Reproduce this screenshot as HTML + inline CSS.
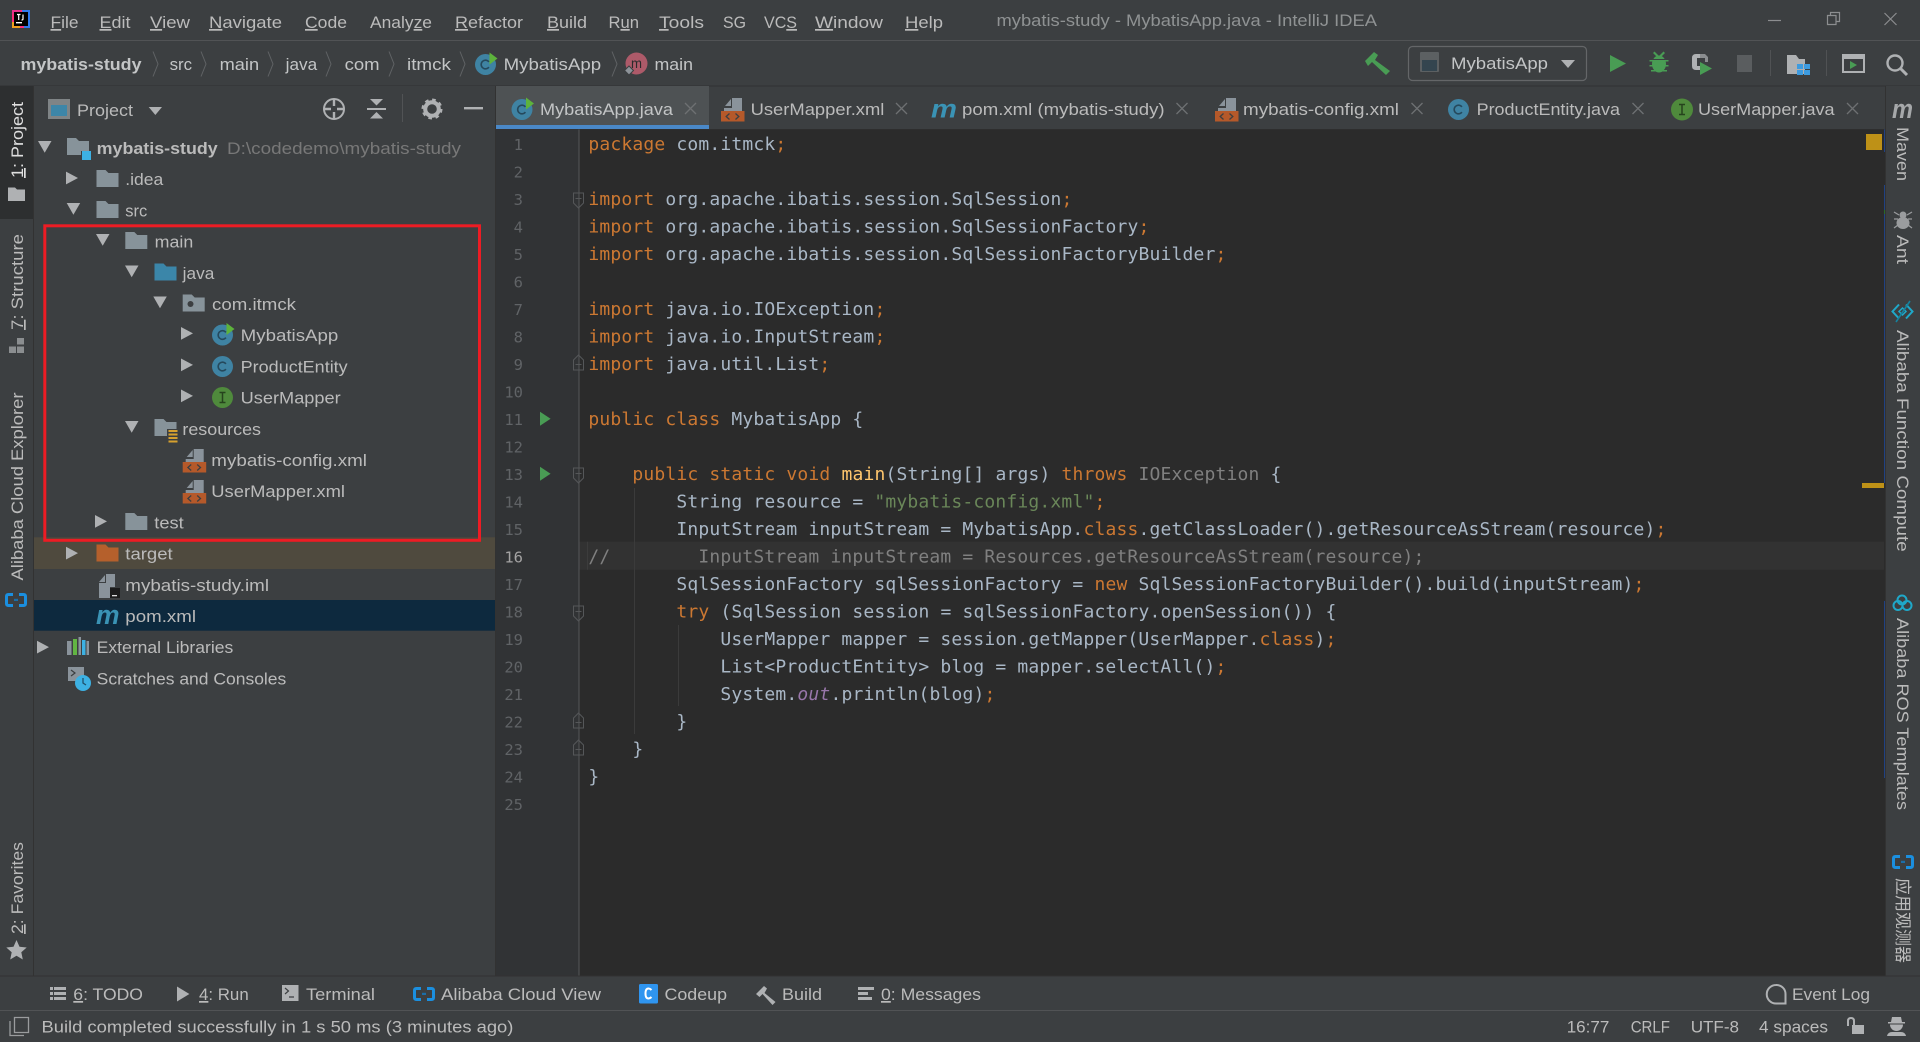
<!DOCTYPE html>
<html lang="en">
<head>
<meta charset="utf-8">
<title>mybatis-study - MybatisApp.java - IntelliJ IDEA</title>
<style>
html,body{margin:0;padding:0;background:#3c3f41;width:1920px;height:1042px;overflow:hidden}
svg{display:block}
text{font-family:"Liberation Sans","Noto Sans CJK SC",sans-serif;font-size:17px;fill:#bbbbbb;white-space:pre}
.u{text-decoration:underline}
.m{fill:#bbbbbb}
.t{fill:#c3c5c6}
.code text,text.c{font-family:"DejaVu Sans Mono","Liberation Mono",monospace;font-size:18px;letter-spacing:.164px;fill:#a9b7c6}
.k{fill:#cc7832}
.s{fill:#6a8759}
.g{fill:#808080}
.f{fill:#ffc66d}
.o{fill:#9876aa;font-style:italic}
.n text{font-family:"DejaVu Sans Mono","Liberation Mono",monospace;font-size:15.5px;fill:#606366;text-anchor:end}
</style>
</head>
<body>
<svg xmlns="http://www.w3.org/2000/svg" width="1920" height="1042" viewBox="0 0 1920 1042">
<defs>
<path id="folder" d="M0 0h9l3 3h10v14H0z"/>
<g id="cls"><circle cx="0" cy="0" r="10.5" fill="#3f83a3"/><path d="M3.4-2.6A4.3 4.3 0 1 0 3.4 2.6" fill="none" stroke="#25495c" stroke-width="1.6"/></g>
<g id="clsrun"><use href="#cls"/><path d="M4-12l8 6-8 6z" fill="#5db33c"/></g>
<g id="xmlicon"><path d="M4 8l6-7v7zM11 0h10v13H3v-3h8z" fill="#8a939b"/><rect x="0" y="13" width="23.5" height="10.5" fill="#b5592a"/><path d="M8.5 15.5l-3.3 3 3.3 3M14.5 15.5l3.3 3-3.3 3" fill="none" stroke="#3c3f41" stroke-width="1.3"/></g>
<path id="arrR" d="M0 0l12 6.4L0 12.800z" fill="#afb1b3"/>
<path id="arrD" d="M0 0h13.500L6.700 11.800z" fill="#afb1b3"/>
<path id="foldD" d="M0 0h10v10l-5 5-5-5zM2 5.500h6" fill="none" stroke="#555759" stroke-width="1"/>
<path id="foldU" d="M0 15h10V5L5 0 0 5zM2 9.500h6" fill="none" stroke="#555759" stroke-width="1"/>
<path id="x" d="M0 0l11 11M11 0L0 11" fill="none" stroke="#6e7072" stroke-width="1.300"/>
<g id="chev"><path d="M0-12.500l5 12.500-5 12.500" fill="none" stroke="#606365" stroke-width="1"/></g>
<g id="cloud"><path d="M8 1.500H3.500Q1.500 1.500 1.500 3.500v7q0 2 2 2H8M14 1.500h4.500q2 0 2 2v7q0 2-2 2H14" fill="none" stroke="#1b8fdf" stroke-width="3"/><rect x="9" y="5.800" width="4" height="2.200" fill="#1b6ea8"/></g>
</defs>

<!-- base -->
<rect width="1920" height="1042" fill="#3c3f41"/>

<!-- title bar -->
<g>
<rect x="12" y="10" width="18" height="18" fill="#ff2d7a"/>
<path d="M12 10h9v4h-9z" fill="#e8318a"/><path d="M22 10h8v18h-6z" fill="#2f7bf0"/><path d="M12 22h8v6h-8z" fill="#f0a020"/>
<rect x="14" y="12" width="14" height="14" fill="#000"/>
<rect x="16" y="22" width="6" height="1.400" fill="#fff"/>
<path d="M17 14.500h3.500M18.700 14.500v5.500M23 14.500v4.500q0 1-1.500 1" fill="none" stroke="#fff" stroke-width="1.200"/>
</g>
<g class="menu">
<text class="m" x="50.500" y="28" textLength="28" lengthAdjust="spacingAndGlyphs"><tspan class="u">F</tspan>ile</text>
<text class="m" x="99.500" y="28" textLength="31" lengthAdjust="spacingAndGlyphs"><tspan class="u">E</tspan>dit</text>
<text class="m" x="150" y="28" textLength="40" lengthAdjust="spacingAndGlyphs"><tspan class="u">V</tspan>iew</text>
<text class="m" x="209" y="28" textLength="73" lengthAdjust="spacingAndGlyphs"><tspan class="u">N</tspan>avigate</text>
<text class="m" x="305" y="28" textLength="42" lengthAdjust="spacingAndGlyphs"><tspan class="u">C</tspan>ode</text>
<text class="m" x="370" y="28" textLength="62" lengthAdjust="spacingAndGlyphs">Analy<tspan class="u">z</tspan>e</text>
<text class="m" x="455" y="28" textLength="68" lengthAdjust="spacingAndGlyphs"><tspan class="u">R</tspan>efactor</text>
<text class="m" x="547" y="28" textLength="40" lengthAdjust="spacingAndGlyphs"><tspan class="u">B</tspan>uild</text>
<text class="m" x="608.500" y="28" textLength="30.500" lengthAdjust="spacingAndGlyphs">R<tspan class="u">u</tspan>n</text>
<text class="m" x="659" y="28" textLength="45" lengthAdjust="spacingAndGlyphs"><tspan class="u">T</tspan>ools</text>
<text class="m" x="723" y="28" textLength="23" lengthAdjust="spacingAndGlyphs">SG</text>
<text class="m" x="764" y="28" textLength="33" lengthAdjust="spacingAndGlyphs">VC<tspan class="u">S</tspan></text>
<text class="m" x="815" y="28" textLength="68" lengthAdjust="spacingAndGlyphs"><tspan class="u">W</tspan>indow</text>
<text class="m" x="905" y="28" textLength="38" lengthAdjust="spacingAndGlyphs"><tspan class="u">H</tspan>elp</text>
</g>
<text x="996.500" y="26" textLength="380.500" lengthAdjust="spacingAndGlyphs" style="fill:#8f9293">mybatis-study - MybatisApp.java - IntelliJ IDEA</text>
<g fill="none" stroke="#8c8e90" stroke-width="1.200">
<path d="M1768 20.500h13"/>
<path d="M1827.500 15.500h8.500v9h-8.500zM1830.500 15.500v-3h9v9h-3.500"/>
<path d="M1884.500 13l12 12M1896.500 13l-12 12"/>
</g>
<rect x="0" y="40" width="1920" height="1" fill="#515355"/>

<!-- breadcrumb -->
<text x="20.500" y="70" textLength="121" lengthAdjust="spacingAndGlyphs" font-weight="bold" class="t">mybatis-study</text>
<use href="#chev" x="153" y="64"/><text class="t" x="169.600" y="70" textLength="22.500" lengthAdjust="spacingAndGlyphs">src</text>
<use href="#chev" x="201" y="64"/><text class="t" x="219.600" y="70" textLength="39.500" lengthAdjust="spacingAndGlyphs">main</text>
<use href="#chev" x="268" y="64"/><text class="t" x="285.700" y="70" textLength="31.500" lengthAdjust="spacingAndGlyphs">java</text>
<use href="#chev" x="326" y="64"/><text class="t" x="344.600" y="70" textLength="35" lengthAdjust="spacingAndGlyphs">com</text>
<use href="#chev" x="389" y="64"/><text class="t" x="407" y="70" textLength="44" lengthAdjust="spacingAndGlyphs">itmck</text>
<use href="#chev" x="460" y="64"/>
<use href="#clsrun" x="485.500" y="64.500"/>
<text class="t" x="503.600" y="70" textLength="97.500" lengthAdjust="spacingAndGlyphs">MybatisApp</text>
<use href="#chev" x="612" y="64"/>
<circle cx="636.500" cy="63.500" r="11" fill="#ad5a69"/>
<text x="631" y="68" textLength="11" lengthAdjust="spacingAndGlyphs" style="font-size:14px;fill:#2b2b2b">m</text>
<path d="M629 66l4.500 4.500-4.500 4.500-4.500-4.500z" fill="#8d9399" stroke="#3c3f41"/>
<text class="t" x="654.500" y="70" textLength="38.500" lengthAdjust="spacingAndGlyphs">main</text>

<!-- nav toolbar -->
<path d="M1365 61l9-9 4 3-3 5 15 11-4 4-14-13-4 4z" fill="#499c54"/>
<rect x="1408.500" y="46.500" width="178" height="34" rx="4" fill="#3c3f41" stroke="#646668" stroke-width="1.200"/>
<rect x="1420" y="52" width="19" height="20" rx="1" fill="#5c6062"/>
<rect x="1422" y="60" width="15" height="11" fill="#34454f"/>
<text x="1451" y="69" textLength="97" lengthAdjust="spacingAndGlyphs" class="t">MybatisApp</text>
<path d="M1561 60h14l-7 8z" fill="#afb1b3"/>
<path d="M1610 55l16 8.500-16 8.500z" fill="#499c54"/>
<g fill="#499c54"><ellipse cx="1659" cy="64" rx="7" ry="8.500"/><path d="M1653 53l4 4 1.500-1.500-4-4zM1665 53l-4 4-1.500-1.500 4-4z"/><path d="M1649.500 60h19v1.500h-19zM1649.500 65h19v1.500h-19zM1651 70h16v1.500h-16z"/></g>
<rect x="1653" y="59" width="12" height="1" fill="#3c3f41"/>
<path d="M1701 54h-5q-4 0-4 4v8q0 4 4 4h5v-4h-4v-8h4z" fill="#afb1b3"/>
<path d="M1700 62v13l12-6.500z" fill="#499c54"/>
<path d="M1700 54h5l3 3v5h-3v-4h-5z" fill="#8a8d8f"/>
<rect x="1737" y="55" width="15" height="17" fill="#5a5d5f"/>
<rect x="1770" y="50" width="1" height="26" fill="#505254"/>
<path d="M1787 55h9l3 4h6v15h-18z" fill="#afb1b3"/>
<g fill="#3d9be0"><rect x="1797" y="64" width="6" height="5"/><rect x="1804" y="64" width="6" height="5"/><rect x="1797" y="70" width="6" height="5"/><rect x="1804" y="70" width="6" height="5"/></g>
<rect x="1826" y="50" width="1" height="26" fill="#505254"/>
<rect x="1843" y="55" width="21" height="17" fill="none" stroke="#afb1b3" stroke-width="2"/>
<rect x="1843" y="55" width="21" height="4" fill="#afb1b3"/>
<path d="M1850 61l7 4-7 4z" fill="#499c54"/>
<circle cx="1895" cy="63" r="7.500" fill="none" stroke="#afb1b3" stroke-width="2.400"/>
<path d="M1900 68l7 7" stroke="#afb1b3" stroke-width="3"/>
<rect x="0" y="85.500" width="1920" height="1" fill="#2f3132"/>

<!-- left strip -->
<rect x="0" y="86" width="33" height="890" fill="#3c3f41"/>
<rect x="0" y="86" width="33" height="133" fill="#2d2f30"/>
<rect x="33" y="86" width="1" height="890" fill="#323232"/>
<text transform="translate(23,178) rotate(-90)" textLength="76" lengthAdjust="spacingAndGlyphs" style="fill:#e0e0e0"><tspan class="u">1</tspan>: Project</text>
<path d="M8 187.500h7l2 2h8v11.500H8z" fill="#afb1b3"/>
<text transform="translate(23,330) rotate(-90)" textLength="96" lengthAdjust="spacingAndGlyphs"><tspan class="u">7</tspan>: Structure</text>
<g fill="#8b8e90"><rect x="17" y="338" width="7" height="6.500"/><rect x="9" y="346.500" width="7" height="6.500"/><rect x="17" y="346.500" width="7" height="6.500"/></g>
<text transform="translate(23,580.500) rotate(-90)" textLength="188" lengthAdjust="spacingAndGlyphs">Alibaba Cloud Explorer</text>
<use href="#cloud" x="5" y="593"/>
<text transform="translate(23,934) rotate(-90)" textLength="92" lengthAdjust="spacingAndGlyphs"><tspan class="u">2</tspan>: Favorites</text>
<path d="M16.500 940l3 6.700 7.200.8-5.400 4.800 1.500 7.200-6.300-3.700-6.300 3.700 1.500-7.200-5.400-4.800 7.200-.8z" fill="#afb1b3"/>

<!-- project panel -->
<rect x="34" y="86" width="461" height="890" fill="#3c3f41"/>
<rect x="495" y="86" width="1" height="890" fill="#323232"/>
<rect x="48" y="99" width="22" height="20" fill="#7f8486"/>
<rect x="51" y="105" width="16" height="11" fill="#3d86a8"/>
<text x="77" y="116" textLength="56" lengthAdjust="spacingAndGlyphs">Project</text>
<path d="M148.700 107h13.300l-6.650 8z" fill="#afb1b3"/>
<g fill="none" stroke="#afb1b3" stroke-width="2"><circle cx="334" cy="109" r="10"/><path d="M334 99v7M334 112v7M324 109h7M337 109h7" stroke-width="2.400"/></g>
<g fill="#afb1b3"><path d="M370 99h13l-6.500 6.500z"/><rect x="367" y="108" width="19" height="2"/><path d="M370 118.500h13l-6.500-6.500z"/></g>
<rect x="402" y="94" width="1" height="28" fill="#515355"/>
<circle cx="432" cy="109" r="6.800" fill="none" stroke="#afb1b3" stroke-width="4"/>
<circle cx="432" cy="109" r="9.200" fill="none" stroke="#afb1b3" stroke-width="2.600" stroke-dasharray="3.600 3.600"/>
<rect x="464" y="107" width="19" height="2.400" fill="#afb1b3"/>

<!-- tree rows -->
<rect x="34" y="537.300" width="461" height="31.700" fill="#4f4a3e"/>
<rect x="34" y="600" width="461" height="30.700" fill="#0d293e"/>

<use href="#arrD" x="38" y="141"/>
<use href="#folder" x="67" y="138" fill="#87939a"/><rect x="81" y="151" width="10" height="10" fill="#3c3f41"/><rect x="82" y="151" width="9" height="9" fill="#3db1e3"/>
<text x="96.700" y="154" textLength="121" lengthAdjust="spacingAndGlyphs" font-weight="bold">mybatis-study</text>
<text x="227" y="154" textLength="234" lengthAdjust="spacingAndGlyphs" style="fill:#787878">D:\codedemo\mybatis-study</text>

<use href="#arrR" x="66" y="171.600"/>
<use href="#folder" x="96.500" y="170" fill="#87939a"/>
<text x="125.300" y="185.200" textLength="38" lengthAdjust="spacingAndGlyphs">.idea</text>

<use href="#arrD" x="66.700" y="203"/>
<use href="#folder" x="96.500" y="201" fill="#87939a"/>
<text x="125.300" y="216.400" textLength="22" lengthAdjust="spacingAndGlyphs">src</text>

<use href="#arrD" x="96" y="234"/>
<use href="#folder" x="125.300" y="232" fill="#87939a"/>
<text x="154.700" y="247.600" textLength="38.600" lengthAdjust="spacingAndGlyphs">main</text>

<use href="#arrD" x="125" y="265.500"/>
<use href="#folder" x="154.500" y="263.500" fill="#3b86a9"/>
<text x="182.700" y="278.800" textLength="31.600" lengthAdjust="spacingAndGlyphs">java</text>

<use href="#arrD" x="153.300" y="296.500"/>
<use href="#folder" x="182.700" y="294.500" fill="#87939a"/><circle cx="190.500" cy="304" r="3" fill="#3c3f41"/>
<text x="212" y="310" textLength="84" lengthAdjust="spacingAndGlyphs">com.itmck</text>

<use href="#arrR" x="181" y="327"/>
<use href="#clsrun" x="222.500" y="335"/>
<text x="240.700" y="341.200" textLength="97.600" lengthAdjust="spacingAndGlyphs">MybatisApp</text>

<use href="#arrR" x="181" y="358.500"/>
<use href="#cls" x="222.500" y="366.500"/>
<text x="240.700" y="372.400" textLength="107" lengthAdjust="spacingAndGlyphs">ProductEntity</text>

<use href="#arrR" x="181" y="389.500"/>
<circle cx="222.500" cy="397.500" r="10.500" fill="#4f8a3c"/>
<path d="M219.500 392.500h6M219.500 402.500h6M222.500 392.500v10" fill="none" stroke="#26431d" stroke-width="1.500"/>
<text x="240.700" y="403.600" textLength="100" lengthAdjust="spacingAndGlyphs">UserMapper</text>

<use href="#arrD" x="125" y="421"/>
<use href="#folder" x="154.500" y="419" fill="#87939a"/><rect x="167" y="429" width="12" height="14" fill="#3c3f41"/>
<g fill="#d6a02e"><rect x="168.500" y="430" width="9" height="2"/><rect x="168.500" y="433.500" width="9" height="2"/><rect x="168.500" y="437" width="9" height="2"/><rect x="168.500" y="440.500" width="9" height="2"/></g>
<text x="182.400" y="434.800" textLength="78.600" lengthAdjust="spacingAndGlyphs">resources</text>

<use href="#xmlicon" x="182.700" y="449"/>
<text x="211.300" y="466" textLength="155.700" lengthAdjust="spacingAndGlyphs">mybatis-config.xml</text>

<use href="#xmlicon" x="182.700" y="480"/>
<text x="211.300" y="497.200" textLength="133.700" lengthAdjust="spacingAndGlyphs">UserMapper.xml</text>

<use href="#arrR" x="95" y="515"/>
<use href="#folder" x="125.300" y="513" fill="#87939a"/>
<text x="154.300" y="528.400" textLength="29.400" lengthAdjust="spacingAndGlyphs">test</text>

<use href="#arrR" x="66" y="546.700"/>
<use href="#folder" x="96.500" y="544.500" fill="#b5602c"/>
<text x="125.300" y="559.600" textLength="47.400" lengthAdjust="spacingAndGlyphs">target</text>

<path d="M99 582l6-7v7zM106 574h9v13h-5v11H99v-15h7z" fill="#8a939b"/>
<rect x="110" y="588" width="10" height="10" fill="#1c1c1c"/><rect x="112" y="595" width="5" height="1.300" fill="#ddd"/>
<text x="125.300" y="590.800" textLength="143.700" lengthAdjust="spacingAndGlyphs">mybatis-study.iml</text>

<text x="96" y="624" textLength="23.500" lengthAdjust="spacingAndGlyphs" style="font-size:27px;font-weight:bold;font-style:italic;fill:#3a93b5">m</text>
<text x="125.300" y="622" textLength="70.700" lengthAdjust="spacingAndGlyphs">pom.xml</text>

<use href="#arrR" x="37" y="640.700"/>
<g><rect x="67" y="641" width="4.500" height="14" fill="#8a939b"/><rect x="73" y="639" width="4" height="16" fill="#62b543"/><rect x="78.500" y="637" width="2.500" height="18" fill="#8a939b"/><rect x="82" y="640" width="3.500" height="15" fill="#3db1e3"/><rect x="86.500" y="641" width="2.500" height="14" fill="#8a939b"/></g>
<text x="96.700" y="653.200" textLength="136.600" lengthAdjust="spacingAndGlyphs">External Libraries</text>

<rect x="68" y="667" width="16" height="14" fill="#8a939b"/><path d="M71 670l4 3-4 3" fill="none" stroke="#3c3f41" stroke-width="1.200"/>
<circle cx="83" cy="683" r="8" fill="#3db1e3"/><path d="M83 678v5l3 2" fill="none" stroke="#20506a" stroke-width="1.300"/>
<text x="96.700" y="684.400" textLength="189.600" lengthAdjust="spacingAndGlyphs">Scratches and Consoles</text>

<!-- red annotation rect -->
<rect x="44.800" y="225.800" width="434.700" height="314.500" fill="none" stroke="#ed1c24" stroke-width="3"/>

<!-- tab bar -->
<rect x="496" y="86" width="213" height="39" fill="#4e5254"/>
<rect x="496" y="125" width="213" height="4.400" fill="#4a88c7"/>
<rect x="709" y="129" width="1176" height="1" fill="#323232"/>
<use href="#clsrun" x="522" y="109.500"/>
<text x="540" y="115" textLength="133" lengthAdjust="spacingAndGlyphs" class="t">MybatisApp.java</text>
<use href="#x" x="685" y="103"/>

<use href="#xmlicon" x="721" y="98"/>
<text x="750.600" y="115" textLength="133.800" lengthAdjust="spacingAndGlyphs">UserMapper.xml</text>
<use href="#x" x="896" y="103"/>

<text x="931" y="117.500" textLength="26" lengthAdjust="spacingAndGlyphs" style="font-size:26px;font-weight:bold;font-style:italic;fill:#3a93b5">m</text>
<text x="962" y="115" textLength="202.600" lengthAdjust="spacingAndGlyphs">pom.xml (mybatis-study)</text>
<use href="#x" x="1176.500" y="103"/>

<use href="#xmlicon" x="1215" y="98"/>
<text x="1243" y="115" textLength="156" lengthAdjust="spacingAndGlyphs">mybatis-config.xml</text>
<use href="#x" x="1411.500" y="103"/>

<use href="#cls" x="1458.500" y="109.500"/>
<text x="1476.600" y="115" textLength="143.400" lengthAdjust="spacingAndGlyphs">ProductEntity.java</text>
<use href="#x" x="1632.500" y="103"/>

<circle cx="1682" cy="109.500" r="11" fill="#4f8a3c"/>
<path d="M1679 104.500h6M1679 114.500h6M1682 104.500v10" fill="none" stroke="#26431d" stroke-width="1.500"/>
<text x="1698" y="115" textLength="136.600" lengthAdjust="spacingAndGlyphs">UserMapper.java</text>
<use href="#x" x="1847" y="103"/>
<rect x="1885" y="86" width="1" height="44" fill="#323232"/>

<!-- editor -->
<rect x="496" y="129.400" width="1389" height="846.600" fill="#2b2b2b"/>
<rect x="496" y="129.400" width="83" height="846.600" fill="#313335"/>
<rect x="579" y="541.700" width="1305" height="28" fill="#323232"/>
<rect x="578.500" y="129.400" width="1" height="846.600" fill="#555759"/>
<rect x="587" y="541.700" width="1" height="28" fill="#3c3c3c"/>
<rect x="634" y="488" width="1" height="246" fill="#3b3b3b"/>
<rect x="678" y="625" width="1" height="81" fill="#3b3b3b"/>
<rect x="496" y="129" width="1389" height="0.500" fill="#323232"/>

<!-- line numbers -->
<g class="n">
<text x="523" y="150">1</text><text x="523" y="177.500">2</text><text x="523" y="205">3</text><text x="523" y="232.500">4</text><text x="523" y="260">5</text>
<text x="523" y="287.500">6</text><text x="523" y="315">7</text><text x="523" y="342.500">8</text><text x="523" y="370">9</text><text x="523" y="397.500">10</text>
<text x="523" y="425">11</text><text x="523" y="452.500">12</text><text x="523" y="480">13</text><text x="523" y="507.500">14</text><text x="523" y="535">15</text>
<text x="523" y="562.500" style="fill:#a4a3a3">16</text><text x="523" y="590">17</text><text x="523" y="617.500">18</text><text x="523" y="645">19</text><text x="523" y="672.500">20</text>
<text x="523" y="700">21</text><text x="523" y="727.500">22</text><text x="523" y="755">23</text><text x="523" y="782.500">24</text><text x="523" y="810">25</text>
</g>

<!-- gutter marks -->
<path d="M540 411.700l10.600 7-10.600 7z" fill="#499c54"/>
<path d="M540 466.700l10.600 7-10.600 7z" fill="#499c54"/>
<use href="#foldD" x="573.500" y="193"/>
<use href="#foldU" x="573.500" y="355"/>
<use href="#foldD" x="573.500" y="468"/>
<use href="#foldD" x="573.500" y="606"/>
<use href="#foldU" x="573.500" y="713"/>
<use href="#foldU" x="573.500" y="740"/>

<!-- code -->
<g class="code">
<text x="588.400" y="150"><tspan class="k">package</tspan> com.itmck<tspan class="k">;</tspan></text>
<text x="588.400" y="205"><tspan class="k">import</tspan> org.apache.ibatis.session.SqlSession<tspan class="k">;</tspan></text>
<text x="588.400" y="232.500"><tspan class="k">import</tspan> org.apache.ibatis.session.SqlSessionFactory<tspan class="k">;</tspan></text>
<text x="588.400" y="260"><tspan class="k">import</tspan> org.apache.ibatis.session.SqlSessionFactoryBuilder<tspan class="k">;</tspan></text>
<text x="588.400" y="315"><tspan class="k">import</tspan> java.io.IOException<tspan class="k">;</tspan></text>
<text x="588.400" y="342.500"><tspan class="k">import</tspan> java.io.InputStream<tspan class="k">;</tspan></text>
<text x="588.400" y="370"><tspan class="k">import</tspan> java.util.List<tspan class="k">;</tspan></text>
<text x="588.400" y="425"><tspan class="k">public class</tspan> MybatisApp {</text>
<text x="588.400" y="480">    <tspan class="k">public static void</tspan> <tspan class="f">main</tspan>(String[] args) <tspan class="k">throws</tspan> <tspan class="g">IOException</tspan> {</text>
<text x="588.400" y="507.500">        String resource = <tspan class="s">"mybatis-config.xml"</tspan><tspan class="k">;</tspan></text>
<text x="588.400" y="535">        InputStream inputStream = MybatisApp.<tspan class="k">class</tspan>.getClassLoader().getResourceAsStream(resource)<tspan class="k">;</tspan></text>
<text x="588.400" y="562.500"><tspan class="g">//        InputStream inputStream = Resources.getResourceAsStream(resource);</tspan></text>
<text x="588.400" y="590">        SqlSessionFactory sqlSessionFactory = <tspan class="k">new</tspan> SqlSessionFactoryBuilder().build(inputStream)<tspan class="k">;</tspan></text>
<text x="588.400" y="617.500">        <tspan class="k">try</tspan> (SqlSession session = sqlSessionFactory.openSession()) {</text>
<text x="588.400" y="645">            UserMapper mapper = session.getMapper(UserMapper.<tspan class="k">class</tspan>)<tspan class="k">;</tspan></text>
<text x="588.400" y="672.500">            List&lt;ProductEntity&gt; blog = mapper.selectAll()<tspan class="k">;</tspan></text>
<text x="588.400" y="700">            System.<tspan class="o">out</tspan>.println(blog)<tspan class="k">;</tspan></text>
<text x="588.400" y="727.500">        }</text>
<text x="588.400" y="755">    }</text>
<text x="588.400" y="782.500">}</text>
</g>

<!-- error stripe -->
<g fill="#214283"><rect x="1884" y="129.500" width="1" height="22.500"/><rect x="1884" y="185" width="1" height="298"/><rect x="1884" y="601" width="1" height="177"/></g>
<rect x="1884" y="210" width="1" height="4" fill="#2a6a2a"/>
<rect x="1866" y="134" width="16" height="16" fill="#be9117"/>
<rect x="1862" y="483" width="22" height="5" fill="#be9117"/>

<!-- right strip -->
<rect x="1885" y="86" width="1" height="890" fill="#323232"/>
<rect x="1886" y="86" width="34" height="890" fill="#3c3f41"/>
<text x="1892" y="118" textLength="21" lengthAdjust="spacingAndGlyphs" style="font-size:27px;font-weight:bold;font-style:italic;fill:#a6a8aa">m</text>
<text transform="translate(1897,127) rotate(90)" textLength="54" lengthAdjust="spacingAndGlyphs">Maven</text>
<g fill="#9a9c9e"><circle cx="1903" cy="215" r="3.500"/><ellipse cx="1903" cy="223" rx="6.500" ry="6"/><path d="M1894 212l5 3M1912 212l-5 3M1894 219h4M1912 219h-4M1894 228l4-3M1912 228l-4-3" stroke="#9a9c9e" stroke-width="1.300"/></g>
<text transform="translate(1897,235) rotate(90)" textLength="29" lengthAdjust="spacingAndGlyphs">Ant</text>
<g fill="none" stroke="#1fa8c9" stroke-width="2"><path d="M1899 304.500l-6.500 7 6.500 7M1906 304.500l6.500 7-6.500 7"/><path d="M1902.500 308l3.500 3.500-3.500 3.500-3.500-3.500z" stroke-width="1.500"/><path d="M1896 322l14-21" stroke="#15829e" stroke-width="1.600"/></g>
<text transform="translate(1897,330) rotate(90)" textLength="221.700" lengthAdjust="spacingAndGlyphs">Alibaba Function Compute</text>
<g fill="none" stroke="#1fa8c9" stroke-width="2"><circle cx="1902" cy="600" r="4.500"/><circle cx="1898" cy="605.500" r="4.500"/><circle cx="1907" cy="605.500" r="4.500"/></g>
<text transform="translate(1897,618) rotate(90)" textLength="192" lengthAdjust="spacingAndGlyphs">Alibaba ROS Templates</text>
<use href="#cloud" x="1892" y="855"/>
<text transform="translate(1897,878) rotate(90)" textLength="85" lengthAdjust="spacingAndGlyphs" style="font-size:17px">应用观测器</text>

<!-- bottom tool bar -->
<rect x="0" y="976" width="1920" height="34" fill="#3c3f41"/>
<rect x="0" y="975.500" width="1920" height="1" fill="#323232"/>
<g fill="#afb1b3"><rect x="50" y="987" width="3" height="3"/><rect x="54" y="987" width="12" height="3"/><rect x="50" y="992" width="3" height="3"/><rect x="54" y="992" width="12" height="3"/><rect x="50" y="997" width="3" height="3"/><rect x="54" y="997" width="12" height="3"/></g>
<text x="73.300" y="1000" textLength="69.700" lengthAdjust="spacingAndGlyphs"><tspan class="u">6</tspan>: TODO</text>
<path d="M177 986.500l12.400 7.500-12.400 7.500z" fill="#afb1b3"/>
<text x="199" y="1000" textLength="49.700" lengthAdjust="spacingAndGlyphs"><tspan class="u">4</tspan>: Run</text>
<rect x="282" y="985" width="16.500" height="16" fill="#afb1b3"/><path d="M285 988l3.500 3-3.500 3M289 997h5" fill="none" stroke="#3c3f41" stroke-width="1.200"/>
<text x="306" y="1000" textLength="69" lengthAdjust="spacingAndGlyphs">Terminal</text>
<use href="#cloud" x="413" y="987"/>
<text x="441" y="1000" textLength="160" lengthAdjust="spacingAndGlyphs">Alibaba Cloud View</text>
<rect x="639" y="984" width="19" height="19.500" rx="1.500" fill="#2f95f0"/><path d="M651.500 990q-1.500-1.500-3-1.500-3 0-3 5t3 5q1.500 0 3-1.500" fill="none" stroke="#fff" stroke-width="2"/>
<text x="664.500" y="1000" textLength="62.500" lengthAdjust="spacingAndGlyphs">Codeup</text>
<path d="M756 994l8-8 3 2.500-2.500 4.500 11 9-3 3-10-11-3 3z" fill="#afb1b3"/>
<text x="782" y="1000" textLength="40" lengthAdjust="spacingAndGlyphs">Build</text>
<g fill="#afb1b3"><rect x="858" y="987" width="16" height="3"/><rect x="858" y="992" width="10" height="3"/><rect x="858" y="997" width="14" height="3"/></g>
<text x="881" y="1000" textLength="100" lengthAdjust="spacingAndGlyphs"><tspan class="u">0</tspan>: Messages</text>
<path d="M1776 985a9 9 0 0 1 9.500 9v9.500H1776a9 9 0 0 1 0-18.500z" fill="none" stroke="#afb1b3" stroke-width="2"/>
<text x="1792" y="1000" textLength="78" lengthAdjust="spacingAndGlyphs">Event Log</text>

<!-- status bar -->
<rect x="0" y="1010" width="1920" height="1" fill="#515355"/>
<path d="M14.500 1017.500h14v15h-14zM10 1021v14.500h14" fill="none" stroke="#9a9c9e" stroke-width="1.300"/>
<text x="41.500" y="1032.500" textLength="471.900" lengthAdjust="spacingAndGlyphs">Build completed successfully in 1 s 50 ms (3 minutes ago)</text>
<text x="1566.700" y="1032.500" textLength="42.600" lengthAdjust="spacingAndGlyphs">16:77</text>
<text x="1630.700" y="1032.500" textLength="39.300" lengthAdjust="spacingAndGlyphs">CRLF</text>
<text x="1690.700" y="1032.500" textLength="48.300" lengthAdjust="spacingAndGlyphs">UTF-8</text>
<text x="1759" y="1032.500" textLength="69" lengthAdjust="spacingAndGlyphs">4 spaces</text>
<path d="M1848 1026v-5q0-3 3-3t3 3v4" fill="none" stroke="#afb1b3" stroke-width="2"/>
<rect x="1852" y="1025" width="12" height="9" fill="#afb1b3"/>
<g fill="#afb1b3"><path d="M1891 1022l1-5h9l1 5h3v1.500h-17v-1.500z"/><path d="M1890 1024.500h13a6.500 6.500 0 0 1-13 0z"/><path d="M1887 1036q1-4 5-4h9q4 0 5 4z"/></g>
</svg>
</body>
</html>
